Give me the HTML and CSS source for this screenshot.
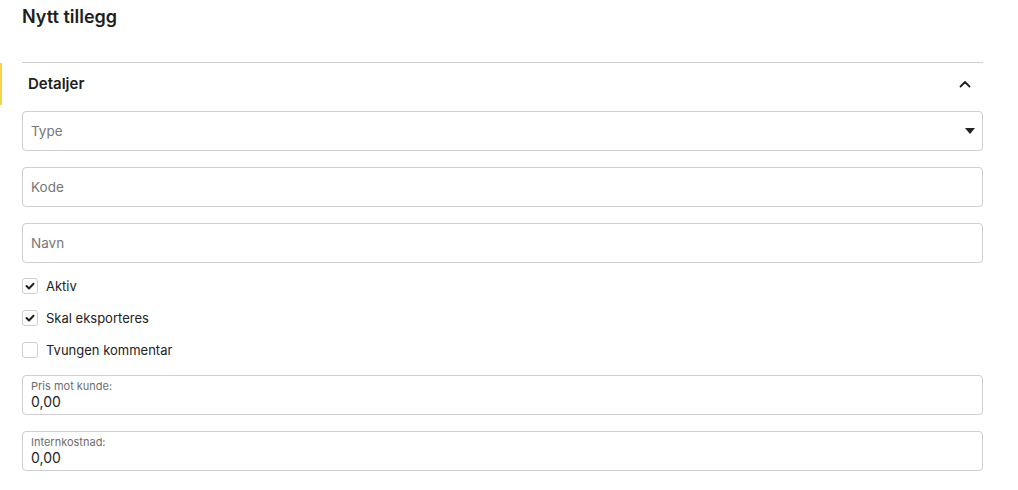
FILE: index.html
```html
<!DOCTYPE html>
<html lang="no">
<head>
<meta charset="utf-8">
<title>Nytt tillegg</title>
<link rel="stylesheet" href="styles.css">
</head>
<body>
<div class="page">
  <h1 class="title">Nytt tillegg</h1>
  <section class="panel">
    <div class="panel-head">
      <span class="accent"></span>
      <span class="panel-title">Detaljer</span>
      <svg class="chev" width="14" height="14" viewBox="0 0 14 14"><path d="M2.5 9.5 L7 5 L11.5 9.5" fill="none" stroke="#222" stroke-width="1.8" stroke-linecap="round" stroke-linejoin="round"/></svg>
    </div>
    <div class="fields">
      <div class="field select"><span class="ph">Type</span>
        <svg class="caret" width="10" height="6" viewBox="0 0 10 6"><path d="M0 0 H10 L5 6 Z" fill="#222"/></svg>
      </div>
      <div class="field"><span class="ph">Kode</span></div>
      <div class="field"><span class="ph">Navn</span></div>
      <div class="checks">
        <label class="check"><span class="box on"><svg width="12" height="12" viewBox="0 0 12 12"><path d="M2.5 6 L5 8.5 L9.5 3.8" fill="none" stroke="#222" stroke-width="2" stroke-linecap="round" stroke-linejoin="round"/></svg></span>Aktiv</label>
        <label class="check"><span class="box on"><svg width="12" height="12" viewBox="0 0 12 12"><path d="M2.5 6 L5 8.5 L9.5 3.8" fill="none" stroke="#222" stroke-width="2" stroke-linecap="round" stroke-linejoin="round"/></svg></span>Skal eksporteres</label>
        <label class="check"><span class="box"></span>Tvungen kommentar</label>
      </div>
      <div class="field labelled"><span class="lbl">Pris mot kunde:</span><span class="val">0,00</span></div>
      <div class="field labelled"><span class="lbl">Internkostnad:</span><span class="val">0,00</span></div>
    </div>
  </section>
</div>
</body>
</html>
```
FILE: styles.css
```css
* { box-sizing: border-box; }
body {
  margin: 0;
  background: #fff;
  font-family: Inter, "Noto Sans", sans-serif;
  color: #222;
}
.page {
  padding: 5px 35px 0 22px;
}
.title {
  margin: 0;
  font-size: 18px;
  font-weight: 600;
  line-height: 24px;
  height: 57px;
  color: #1e1e1e;
}
.panel {
  border-top: 1px solid #d0d0d0;
}
.panel-head {
  position: relative;
  display: flex;
  align-items: center;
  justify-content: space-between;
  height: 41px;
  padding: 0 11px 0 6px;
}
.accent {
  position: absolute;
  left: -22px;
  top: 0;
  width: 2px;
  height: 42px;
  background: #f7d54a;
}
.panel-title {
  font-size: 15px;
  font-weight: 600;
  color: #1e1e1e;
}
.chev { display: block; }
.fields {
  display: flex;
  flex-direction: column;
  gap: 16px;
  padding-top: 7px;
}
.field {
  height: 40px;
  border: 1px solid #cfcfcf;
  border-radius: 4px;
  display: flex;
  align-items: center;
  padding: 0 8px;
  font-size: 13.5px;
}
.select { justify-content: space-between; }
.caret { display: block; margin-right: -1px; }
.ph { color: #777; }
.checks {
  display: flex;
  flex-direction: column;
  gap: 14px;
  margin-top: -2px;
}
.check {
  display: flex;
  align-items: center;
  gap: 8px;
  font-size: 13px;
  line-height: 18px;
  height: 18px;
  color: #222;
}
.box {
  width: 16px;
  height: 16px;
  border: 1px solid #cfcfcf;
  border-radius: 3px;
  display: flex;
  align-items: center;
  justify-content: center;
}
.labelled {
  flex-direction: column;
  align-items: flex-start;
  justify-content: center;
  gap: 0;
}
.lbl {
  font-size: 11px;
  color: #6e6e6e;
  line-height: 14px;
}
.val {
  font-size: 14px;
  line-height: 18px;
  color: #1e1e1e;
}
```
